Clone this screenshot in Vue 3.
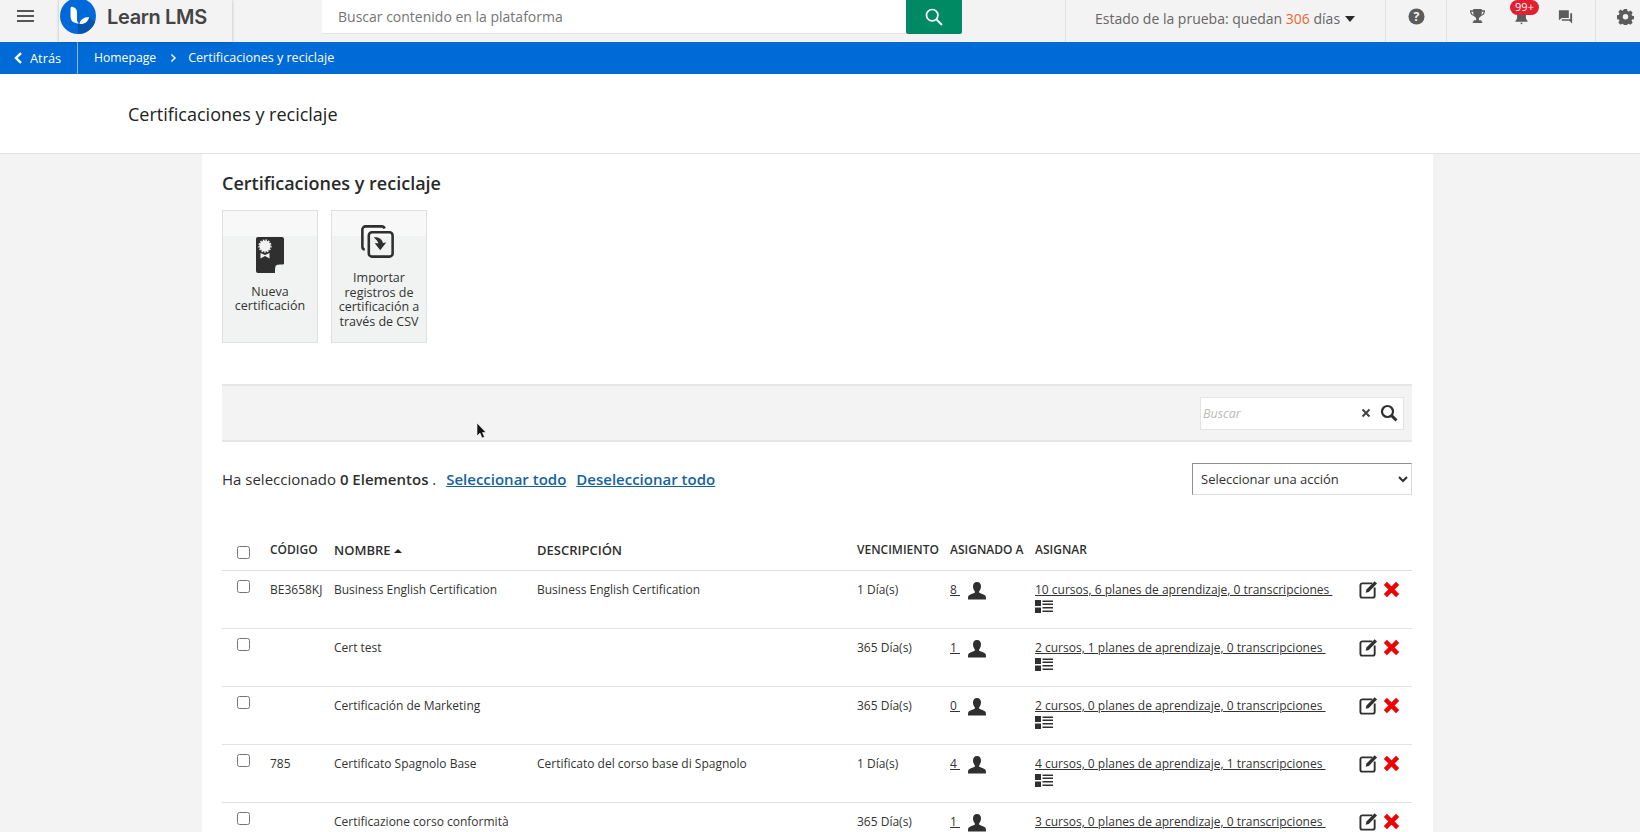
<script setup>
const rows = [
  { code: 'BE3658KJ', name: 'Business English Certification', desc: 'Business English Certification', due: '1 Día(s)', n: '8', assign: '10 cursos, 6 planes de aprendizaje, 0 transcripciones' },
  { code: '', name: 'Cert test', desc: '', due: '365 Día(s)', n: '1', assign: '2 cursos, 1 planes de aprendizaje, 0 transcripciones' },
  { code: '', name: 'Certificación de Marketing', desc: '', due: '365 Día(s)', n: '0', assign: '2 cursos, 0 planes de aprendizaje, 0 transcripciones' },
  { code: '785', name: 'Certificato Spagnolo Base', desc: 'Certificato del corso base di Spagnolo', due: '1 Día(s)', n: '4', assign: '4 cursos, 0 planes de aprendizaje, 1 transcripciones' },
  { code: '', name: 'Certificazione corso conformità', desc: '', due: '365 Día(s)', n: '1', assign: '3 cursos, 0 planes de aprendizaje, 0 transcripciones' },
]
</script>

<template>
  <div class="page">
    <header class="topbar">
      <button class="burger" aria-label="Menú"><span></span><span></span><span></span></button>
      <div class="brand">
        <svg class="logo" viewBox="0 0 36 36" width="36" height="36">
          <circle cx="18" cy="18" r="18" fill="#0069d9"/>
          <path d="M18 36A18 18 0 0 0 35 24L28 19 18 26Z" fill="#0354ad"/>
          <path d="M10.500 10.500c0-1.500 1-2 2.500-1.500 2.300.8 4 2.500 4 5v7.500c0 2 1 3.500 2 4-4.500 0-8.500-2-8.500-7Z" fill="#fff"/>
          <path d="M19.500 26c.5-4 4-7 9.500-7-.3 4.500-4.500 7.500-9.500 7Z" fill="#fff"/>
        </svg>
        <span class="brand-name">Learn LMS</span>
      </div>
      <div class="search">
        <input class="search-input" placeholder="Buscar contenido en la plataforma" />
        <button class="search-btn" aria-label="Buscar">
          <svg viewBox="0 0 20 20" width="20" height="20" fill="none" stroke="#fff" stroke-width="1.700"><circle cx="8.200" cy="8.200" r="5.700"/><path d="M12.400 12.400 18 18" stroke-width="2"/></svg>
        </button>
      </div>
      <div class="trial">
        <span>Estado de la prueba: quedan <b class="days">306</b> días</span><i class="caret"></i>
      </div>
      <div class="tb-cell help">
        <svg viewBox="0 0 18 18" width="17" height="17"><circle cx="9" cy="9" r="8.500" fill="#5c5c5c"/><text x="9" y="13.500" text-anchor="middle" class="q">?</text></svg>
      </div>
      <div class="tb-cell group">
        <svg class="ti" viewBox="0 0 18 18" width="17" height="17" fill="#5c5c5c"><path d="M4.500 1h9v1.500H17c0 3.500-1.500 5.500-4.300 6-.6 1-1.300 1.600-2.200 1.800V13H13v1.200l1 .1V16H4v-1.700l1-.1V13h2.500v-2.700c-.9-.2-1.600-.8-2.200-1.800C2.500 8 1 6 1 2.500h3.500Zm-2 3c.2 1.600.9 2.600 2.200 3.100-.2-.9-.2-2-.2-3.100Zm13 0h-2c0 1.100 0 2.200-.2 3.100 1.300-.5 2-1.500 2.200-3.100Z"/></svg>
        <span class="bell">
          <svg viewBox="0 0 18 18" width="17" height="17" fill="#5c5c5c"><path d="M7 2.500h4c1.800.6 2.700 2 2.700 4v4.500l1.800 3v.5h-13V14l1.800-3V6.500c0-2 .9-3.400 2.700-4ZM7.500 15.500h3L9 17.500Z"/></svg>
          <span class="badge">99+</span>
        </span>
        <svg class="ti" viewBox="0 0 18 18" width="17" height="17" fill="#5c5c5c"><path d="M2 2.500h10.500v8H5l-3 2.500Z"/><path d="M14 5.500h2v11l-3-3H5v-1.500h9Z"/></svg>
      </div>
      <div class="tb-cell gear">
        <svg viewBox="0 0 18 18" width="17" height="17"><path fill="#5c5c5c" fill-rule="evenodd" d="M7.300 1h3.400l.4 2.200 1.300.6 1.900-1.200 2.300 2.400-1.200 1.900.5 1.300 2.100.4v3.200l-2.100.4-.5 1.300 1.200 1.900-2.300 2.400-1.900-1.200-1.300.6-.4 2.200H7.300l-.4-2.200-1.300-.6-1.900 1.200-2.300-2.400 1.200-1.900-.5-1.300-2.100-.4V7.600l2.100-.4.5-1.300-1.200-1.900 2.300-2.400 1.900 1.200 1.300-.6ZM9 6.300a2.900 2.900 0 1 0 0 5.800 2.900 2.900 0 0 0 0-5.800Z"/></svg>
      </div>
    </header>

    <nav class="crumbs">
      <a class="back"><svg viewBox="0 0 10 12" width="10" height="12" fill="none" stroke="#fff" stroke-width="2.400"><path d="M8 1.200 3 6l5 4.800"/></svg>Atrás</a>
      <a class="crumb">Homepage</a>
      <svg class="sep" viewBox="0 0 10 12" width="8" height="10" fill="none" stroke="#fff" stroke-width="1.800"><path d="M3 1.500 7.500 6 3 10.500"/></svg>
      <a class="crumb last">Certificaciones y reciclaje</a>
    </nav>

    <div class="titleband"><h1>Certificaciones y reciclaje</h1></div>

    <main class="content">
      <h2>Certificaciones y reciclaje</h2>

      <div class="tiles">
        <a class="tile">
          <svg class="tile-ico" viewBox="0 0 28 36" width="28" height="36">
            <path d="M2 0h24a2 2 0 0 1 2 2v25l-9 9H2a2 2 0 0 1-2-2V2a2 2 0 0 1 2-2Z" fill="#2f2f2f"/>
            <path d="M28 27.500v.5l-8 8h-1c0-4 0-6.500 1-7.500s3-1 8-1Z" fill="#f2f2f2"/>
            <circle cx="9" cy="9" r="5.600" fill="#f2f2f2"/>
            <circle cx="9" cy="9" r="6" fill="none" stroke="#f2f2f2" stroke-width="1.300" stroke-dasharray="1.600 1.200"/>
            <path d="M4.500 16 9 18l4.500-2v5.500L9 19l-4.500 2.500Z" fill="#f2f2f2"/>
          </svg>
          <span>Nueva certificación</span>
        </a>
        <a class="tile">
          <svg class="tile-ico wide" viewBox="0 0 36 36" width="33" height="33" fill="none" stroke="#2f2f2f" stroke-width="2.800">
            <path d="M4 27c-1.500-.4-2.500-1.600-2.500-3.200V5A3.500 3.500 0 0 1 5 1.500h17.500c1.500 0 2.800.9 3.300 2.300"/>
            <rect x="8.500" y="8" width="26" height="26.500" rx="3.500"/>
            <path d="M14 13.500c4-.5 8.500.5 10 6l3.500-.3-6.500 8.300-6-7.500 4 0c-.8-2.500-2.500-4.500-5-6.500Z" fill="#2f2f2f" stroke="none"/>
          </svg>
          <span>Importar registros de certificación a través de CSV</span>
        </a>
      </div>

      <div class="toolbar">
        <div class="tsearch">
          <input placeholder="Buscar" />
          <svg viewBox="0 0 10 10" width="10" height="10" stroke="#444" stroke-width="2"><path d="M1.500 1.500l7 7M8.500 1.500l-7 7"/></svg>
          <svg viewBox="0 0 18 18" width="18" height="18" fill="none" stroke="#2f2f2f" stroke-width="2.200"><circle cx="7.500" cy="7.500" r="5.500"/><path d="M11.500 11.500 16.500 16.500" stroke-width="3"/></svg>
        </div>
      </div>

      <div class="selbar">
        <p>Ha seleccionado <b>0 Elementos</b> . <a>Seleccionar todo</a><a>Deseleccionar todo</a></p>
        <select class="action"><option>Seleccionar una acción</option></select>
      </div>

      <table class="grid">
        <colgroup>
          <col class="c-check" /><col class="c-code" /><col class="c-name" /><col class="c-desc" />
          <col class="c-due" /><col class="c-num" /><col class="c-assign" /><col />
        </colgroup>
        <thead>
          <tr>
            <th><input type="checkbox" class="chk head-chk" /></th>
            <th>CÓDIGO</th>
            <th class="big">NOMBRE <i class="sort"></i></th>
            <th class="big">DESCRIPCIÓN</th>
            <th>VENCIMIENTO</th>
            <th>ASIGNADO A</th>
            <th>ASIGNAR</th>
            <th></th>
          </tr>
        </thead>
        <tbody>
          <tr v-for="r in rows" :key="r.name">
            <td class="check-cell"><input type="checkbox" class="chk" /></td>
            <td>{{ r.code }}</td>
            <td>{{ r.name }}</td>
            <td>{{ r.desc }}</td>
            <td>{{ r.due }}</td>
            <td>
              <div class="num-cell">
                <a class="u">{{ r.n }}&nbsp;</a>
                <svg class="user" viewBox="0 0 18 18" width="18" height="18" fill="#2f2f2f"><path d="M9 0c2.600 0 4 1.800 4 4.500 0 1.900-.7 3.500-1.700 4.700-.5.600-.4 1.300.2 1.600 1.800.9 4.300 1.500 5.700 2.700.6.500.8 1.500.8 4H0c0-2.500.2-3.500.8-4 1.400-1.200 3.900-1.800 5.700-2.700.6-.3.700-1 .2-1.600C5.700 8 5 6.400 5 4.500 5 1.800 6.400 0 9 0Z"/></svg>
              </div>
            </td>
            <td>
              <a class="u">{{ r.assign }}&nbsp;</a>
              <svg class="list" viewBox="0 0 18 13" width="18" height="13" fill="#2f2f2f"><path d="M0 0h6v6H0ZM0 7.500h6V13H0ZM7.500 .5H18V2H7.500ZM7.500 3.500H18V5H7.500ZM7.500 7H18v1.500H7.500ZM7.500 10.500H18V12H7.500Z"/></svg>
            </td>
            <td>
              <div class="act">
                <svg viewBox="0 0 20 20" width="19" height="19"><path d="M14 3.500H3.500a2 2 0 0 0-2 2V16.500a2 2 0 0 0 2 2H14.500a2 2 0 0 0 2-2V8" fill="none" stroke="#2f2f2f" stroke-width="2"/><path d="M7 13.500 7.800 10 16.500 1.300 19 3.800 10.300 12.500Z" fill="#2f2f2f"/></svg>
                <svg viewBox="0 0 18 18" width="17" height="17" stroke="#f00000" stroke-width="4.600"><path d="M2.500 2.500l13 13M15.500 2.500l-13 13"/></svg>
              </div>
            </td>
          </tr>
        </tbody>
      </table>
    </main>

    <svg class="cursor" viewBox="0 0 11 17" width="11" height="17"><path d="M1 0v13l3-3 2 5 2.500-1-2-4.500H10Z" fill="#111" stroke="#fff" stroke-width=".6"/></svg>
  </div>
</template>

<style>
html, body { margin: 0; background: #f3f3f3; overflow: hidden; }
</style>

<style scoped>
.page {
  position: relative;
  width: 1640px;
  height: 832px;
  overflow: hidden;
  background: #f3f3f3;
  font-family: "Open Sans", sans-serif;
  color: #2f2f2f;
}
.topbar {
  display: flex;
  height: 42px;
  align-items: stretch;
  background: #f3f3f3;
}
.burger {
  width: 59px;
  padding: 0 0 10px 17px;
  border: 0;
  background: none;
  display: flex;
  flex-direction: column;
  justify-content: center;
  gap: 3px;
  flex: none;
  box-sizing: border-box;
}
.burger span { display: block; width: 17px; height: 2px; background: #555; }
.brand {
  flex: none;
  width: 173px;
  box-sizing: border-box;
  display: flex;
  align-items: flex-start;
  gap: 11px;
  padding-left: 1px;
  box-shadow: 0 0 3px rgba(0,0,0,.25);
  position: relative;
}
.logo { margin-top: -2px; }
.brand-name {
  font: 600 20px/35px Inter, sans-serif;
  color: #444;
  letter-spacing: -.35px;
}
.search {
  flex: none;
  display: flex;
  margin-left: 90px;
  width: 640px;
  height: 34px;
}
.search-input {
  flex: 1;
  min-width: 0;
  border: 0;
  border-bottom: 1px solid #e3e3e3;
  padding: 0 16px;
  font: 400 14px "Open Sans", sans-serif;
  outline: 0;
  background: #fff;
}
.search-input::placeholder { color: #757575; opacity: 1; }
.search-btn {
  flex: none;
  width: 56px;
  border: 0;
  background: #008a64;
  border-radius: 0 0 2px 2px;
  padding: 0;
  display: flex;
  align-items: center;
  justify-content: center;
}
.trial {
  flex: none;
  margin-left: 103px;
  width: 321px;
  box-sizing: border-box;
  border-left: 1px solid #e2e2e2;
  border-right: 1px solid #e2e2e2;
  padding-left: 29px;
  display: flex;
  align-items: center;
  gap: 5px;
  font-size: 14px;
  color: #666;
  padding-bottom: 6px;
}
.days { font-weight: 400; color: #e8682f; }
.caret {
  border-left: 5.500px solid transparent;
  border-right: 5.500px solid transparent;
  border-top: 6px solid #2a2a2a;
  margin-top: 2px;
}
.tb-cell { flex: none; display: flex; align-items: center; padding-bottom: 10px; box-sizing: border-box; }
.help { width: 61px; justify-content: center; border-right: 1px solid #e2e2e2; }
.q { font: 700 13px "Open Sans", sans-serif; fill: #f3f3f3; }
.group { width: 149px; border-right: 1px solid #e2e2e2; padding-left: 22px; gap: 27px; }
.bell { position: relative; display: flex; }
.badge {
  position: absolute;
  left: -3px;
  top: -8px;
  width: 29px;
  height: 15px;
  border-radius: 8px;
  background: #e2202f;
  color: #fff;
  font-size: 11px;
  line-height: 14px;
  text-align: center;
}
.gear { padding-left: 21px; }

.crumbs {
  height: 32px;
  background: #006bd6;
  display: flex;
  align-items: center;
  color: #fff;
  font-size: 12.200px;
}
.back {
  flex: none;
  width: 78px;
  height: 100%;
  box-sizing: border-box;
  border-right: 1px solid #8ab8ea;
  display: flex;
  align-items: center;
  gap: 7px;
  padding-left: 13px;
  font-size: 12.800px;
}
.crumbs .crumb { margin-left: 16px; padding-bottom: 2px; }
.crumbs .last { font-size: 12.550px; }
.sep { margin-left: 13px; margin-right: -5px; }
.titleband {
  height: 79px;
  background: #fff;
  border-bottom: 1px solid #e2e2e2;
  box-sizing: content-box;
  display: flex;
  align-items: center;
}
h1 {
  margin: 0 0 0 128px;
  font-weight: 500;
  font-size: 18px;
  color: #222;
}
.content {
  width: 1231px;
  margin-left: 202px;
  box-sizing: border-box;
  background: #fff;
  padding: 15px 21px 0 20px;
  height: 680px;
}
h2 {
  margin: 0;
  font-size: 18px;
  font-weight: 600;
  line-height: 28px;
  color: #2a2a2a;
}
.tiles { display: flex; gap: 13px; margin-top: 13px; }
.tile {
  width: 96px;
  height: 133px;
  box-sizing: border-box;
  border: 1px solid #dfe1e1;
  background: linear-gradient(#f8f8f8 0 25px, #f1f2f2 25px);
  display: flex;
  flex-direction: column;
  align-items: center;
  justify-content: center;
  gap: 12px;
  font-size: 12.500px;
  line-height: 14.500px;
  text-align: center;
  color: #333;
  padding: 0 5px 3px;
}
.tile span { display: block; }
.tile-ico.wide { margin-top: 4px; margin-bottom: 1px; margin-left: -3px; }
.toolbar {
  margin-top: 41px;
  height: 58px;
  box-sizing: border-box;
  border-top: 2px solid #e6e6e6;
  border-bottom: 2px solid #e6e6e6;
  background: #f3f3f3;
  display: flex;
  justify-content: flex-end;
  align-items: center;
  padding-right: 8px;
}
.tsearch {
  width: 204px;
  height: 33px;
  box-sizing: border-box;
  background: #fff;
  border: 1px solid #e0e4e4;
  display: flex;
  align-items: center;
  gap: 9px;
  padding: 0 5px 0 2px;
}
.tsearch input {
  flex: 1;
  min-width: 0;
  border: 0;
  outline: 0;
  padding: 0;
  font: italic 400 12.500px "Open Sans", sans-serif;
}
.tsearch input::placeholder { color: #bbb; opacity: 1; }
.selbar {
  display: flex;
  justify-content: space-between;
  align-items: flex-start;
  margin-top: 21px;
  height: 72px;
}
.selbar p {
  margin: 6px 0 0;
  font-size: 15px;
  line-height: 20px;
  color: #2f2f2f;
}
.selbar b { font-weight: 600; }
.selbar a {
  color: #14639f;
  font-weight: 600;
  text-decoration: underline;
  margin-left: 10px;
}
.selbar a:first-of-type { margin-left: 6px; }
.action {
  width: 220px;
  height: 32px;
  box-sizing: border-box;
  background: #fff;
  border: 1px solid #d8dcdc;
  border-top-color: #8f8f8f;
  border-left-color: #8f8f8f;
  border-radius: 0;
  padding: 0 0 0 4px;
  font: 400 13px "Open Sans", sans-serif;
  color: #2f2f2f;
}
.grid {
  width: 1190px;
  table-layout: fixed;
  border-collapse: collapse;
  font-size: 12px;
}
.c-check { width: 48px; }
.c-code { width: 64px; }
.c-name { width: 203px; }
.c-desc { width: 320px; }
.c-due { width: 93px; }
.c-num { width: 85px; }
.c-assign { width: 324px; }
th {
  height: 28px;
  padding: 0 0 7px;
  text-align: left;
  font-size: 12px;
  font-weight: 600;
  white-space: nowrap;
  color: #2f2f2f;
}
th.big { font-size: 13px; padding-bottom: 5px; }
th:first-child, td:first-child { padding-left: 15px; }
.sort {
  display: inline-block;
  border-left: 4px solid transparent;
  border-right: 4px solid transparent;
  border-bottom: 4px solid #222;
  vertical-align: 2px;
}
thead tr { border-bottom: 1px solid #dedede; }
tbody tr { border-bottom: 1px solid #e2e2e2; height: 58px; }
td {
  vertical-align: top;
  padding: 10px 0 0;
  line-height: 18px;
  color: #333;
}
.check-cell { padding-top: 9px; }
.chk { margin: 0; width: 13px; height: 13px; display: block; }
.head-chk { margin-top: 6px; }
.u { color: #333; text-decoration: underline; white-space: nowrap; }
.num-cell { display: flex; align-items: flex-start; gap: 8px; }
.user { margin-top: 1px; flex: none; }
.list { display: block; margin-top: 1px; }
.act { display: flex; align-items: center; gap: 5px; margin-top: -1px; }
.act svg { flex: none; }
.cursor { position: absolute; left: 476px; top: 423px; }
</style>
